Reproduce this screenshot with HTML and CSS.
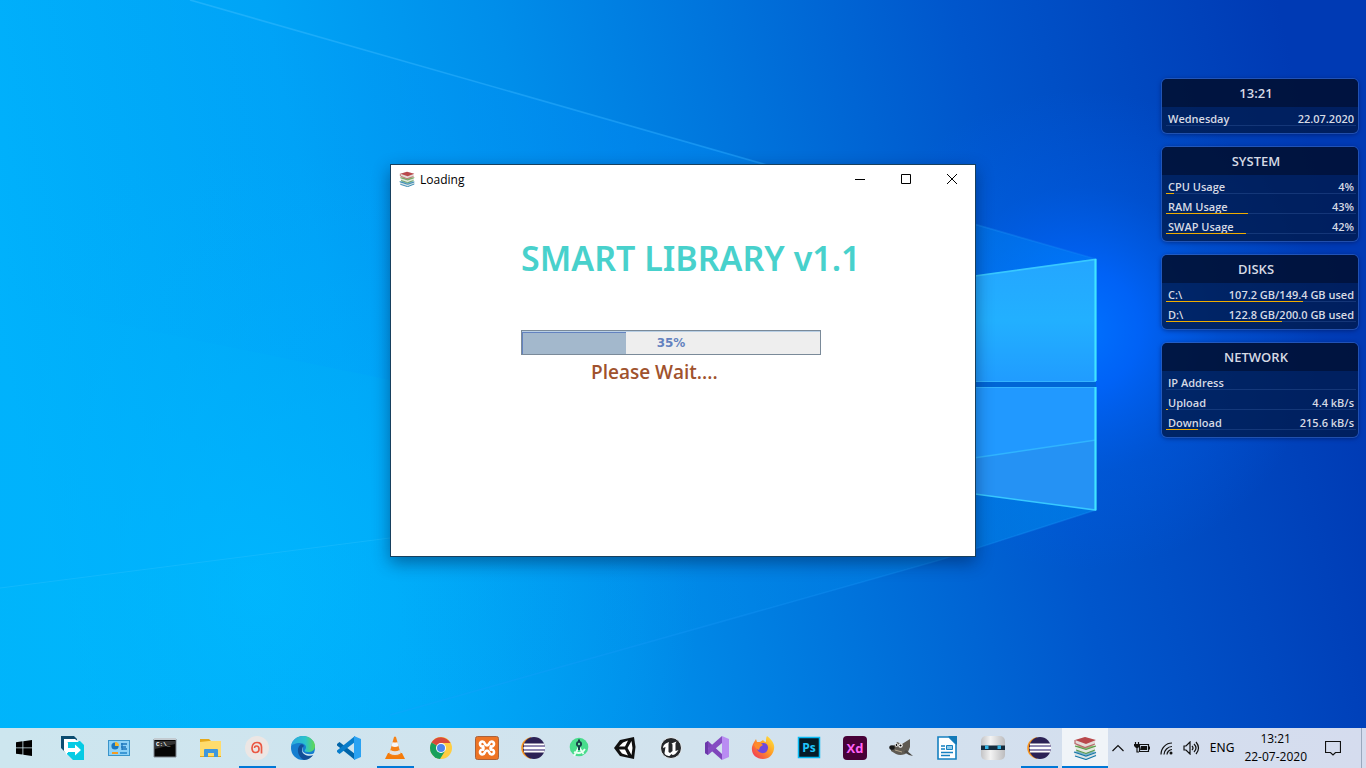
FILE: index.html
```html
<!DOCTYPE html>
<html lang="en">
<head>
<meta charset="utf-8">
<title>Desktop</title>
<link rel="stylesheet" href="styles.css">
</head>
<body>
<svg class="wallpaper" viewBox="0 0 1366 768" preserveAspectRatio="xMidYMid slice" aria-hidden="true">
  <defs>
    <linearGradient id="base" gradientUnits="userSpaceOnUse" x1="40" y1="520" x2="1330" y2="230">
      <stop offset="0" stop-color="#00b2fc"/><stop offset=".25" stop-color="#00a4f6"/><stop offset=".42" stop-color="#008eea"/><stop offset=".58" stop-color="#0074dc"/><stop offset=".76" stop-color="#0056cc"/><stop offset="1" stop-color="#003ab4"/>
    </linearGradient>
    <radialGradient id="glow" gradientUnits="userSpaceOnUse" cx="1080" cy="330" r="240">
      <stop offset="0" stop-color="#0072ff"/><stop offset=".25" stop-color="#0066ff" stop-opacity=".85"/><stop offset=".6" stop-color="#0060f0" stop-opacity=".3"/><stop offset="1" stop-color="#0060f0" stop-opacity="0"/>
    </radialGradient>
    <radialGradient id="cyan" gradientUnits="userSpaceOnUse" cx="260" cy="590" r="440">
      <stop offset="0" stop-color="#00b8ff" stop-opacity=".8"/><stop offset="1" stop-color="#00b0fa" stop-opacity="0"/>
    </radialGradient>
    <linearGradient id="beam" gradientUnits="userSpaceOnUse" x1="0" y1="0" x2="1096" y2="0">
      <stop offset="0" stop-color="#00a0ff" stop-opacity="0"/><stop offset=".55" stop-color="#0090ff" stop-opacity=".5"/><stop offset="1" stop-color="#00a0ff" stop-opacity=".6"/>
    </linearGradient>
    <linearGradient id="ray" gradientUnits="userSpaceOnUse" x1="190" y1="0" x2="1096" y2="0">
      <stop offset="0" stop-color="#40c0ff" stop-opacity=".45"/><stop offset=".65" stop-color="#28a8ff" stop-opacity=".5"/><stop offset="1" stop-color="#28a8ff" stop-opacity=".15"/>
    </linearGradient>
    <linearGradient id="low" gradientUnits="userSpaceOnUse" x1="390" y1="0" x2="1096" y2="0">
      <stop offset="0" stop-color="#00a0f0" stop-opacity="0"/><stop offset=".6" stop-color="#0090f0" stop-opacity=".25"/><stop offset="1" stop-color="#0090f0" stop-opacity=".55"/>
    </linearGradient>
    <linearGradient id="pool" gradientUnits="userSpaceOnUse" x1="0" y1="0" x2="390" y2="0">
      <stop offset="0" stop-color="#00baf8" stop-opacity=".3"/><stop offset="1" stop-color="#00baf8" stop-opacity="0"/>
    </linearGradient>
    <linearGradient id="pane" x1="0" y1="0" x2="0" y2="1">
      <stop offset="0" stop-color="#24a6ff"/><stop offset=".5" stop-color="#22b0ff"/><stop offset="1" stop-color="#209cff"/>
    </linearGradient>
  </defs>
  <rect width="1366" height="768" fill="url(#base)"/>
  <rect width="1366" height="768" fill="url(#cyan)"/>
  <rect width="1366" height="768" fill="url(#glow)"/>
  <path d="M190 0 1096 259 390 380 0 300V0z" fill="url(#beam)" opacity=".5"/>
  <path d="M190 0 1096 259" stroke="url(#ray)" stroke-width="1.6"/>
  <path d="M0 588 390 538V768H0z" fill="url(#pool)"/>
  <path d="M0 588 390 538" stroke="#30c4ff" opacity=".35"/>
  <path d="M1096 510 940 560 390 715 390 500 970 400z" fill="url(#low)"/>
  <path d="M1096 510 940 560 390 715" stroke="#20a0ff" stroke-width="1.500" fill="none" opacity=".25"/>
  <path d="M960 278 1096 259V381H960z" fill="url(#pane)"/>
  <path d="M960 387H1096V510L960 492z" fill="#2199ff"/>
  <path d="M960 460 1096 440V510L960 492z" fill="#2592f4"/>
  <path d="M960 460 1096 440" stroke="#30b4ff" stroke-width="1.500"/>
  <path d="M960 381.500H1096M960 387.500H1096" stroke="#34b4ff"/>
  <path d="M960 384.500H1096" stroke="#0066d6" stroke-width="5"/>
  <path d="M960 278 1095.500 259.500V381M1095.500 387V510L960 492" fill="none" stroke="#38c8ff" stroke-width="1.600"/>
  <path d="M1095.500 259V381M1095.500 387V510" stroke="#40e4ff" stroke-width="2"/>
</svg>

<svg class="sprite" aria-hidden="true">
  <symbol id="books" viewBox="0 0 24 24">
    <path d="M1 16 12 13l11 3v4l-10 3.500L2 20z" fill="#dbe3e6"/><path d="M1 16l11-3 11 3-10 3.500z" fill="#7fb3c9"/><path d="M1 16l12 4 10-3.500M2 20l11 3.500 10-4" fill="none" stroke="#1578a8" stroke-width="1.200"/>
    <path d="M2 10l10-2 10 2v4l-10 3.500L3 14z" fill="#e2e8e0"/><path d="M2 10l10-2 11 2-10 3.500z" fill="#93bb80"/><path d="M2 10l11 3.500 10-3.500M3 14l10 3.500 9-3.500" fill="none" stroke="#5b9b48" stroke-width="1.100"/>
    <path d="M2 4 12 1l10 3v4l-10 3.500L2 8z" fill="#e4dcd9"/><path d="M2 4 12 1l11 3-10 4z" fill="#b9484c"/><path d="M2 4v3.500l10 4L22 8" fill="none" stroke="#b9686a" stroke-width="1.200"/>
  </symbol>
  <symbol id="eclipse" viewBox="0 0 24 24">
    <path d="M10 1C-3 4-3 20 10 23L8 12z" fill="#f7941e"/><circle cx="13" cy="12" r="11" fill="#2c2255"/><path d="M3 8.500h20.500M2.500 12h21.500M3 15.500h20.500" stroke="#fff" stroke-width="2"/><path d="M3 10.200h21M3 13.800h21" stroke="#8d86b4" stroke-width="1.500"/>
  </symbol>
</svg>

<main class="desktop">
  <section class="window" aria-labelledby="window-title">
    <header class="titlebar">
      <svg class="titlebar-icon" aria-hidden="true"><use href="#books"/></svg>
      <span id="window-title" class="titlebar-text">Loading</span>
      <button class="caption-button" aria-label="Minimize"><svg viewBox="0 0 10 10"><path d="M0 5.500h10"/></svg></button>
      <button class="caption-button" aria-label="Maximize"><svg viewBox="0 0 10 10"><path d="M.5.5h9v9h-9z"/></svg></button>
      <button class="caption-button" aria-label="Close"><svg viewBox="0 0 10 10"><path d="M0 0l10 10M10 0 0 10"/></svg></button>
    </header>
    <div class="splash">
      <h1 class="splash-title">SMART LIBRARY v1.1</h1>
      <div class="loader">
        <progress id="load" class="loader-bar" value="35" max="100"></progress>
        <label for="load" class="loader-text">35%</label>
      </div>
      <p class="splash-wait">Please Wait....</p>
    </div>
  </section>

  <aside class="gadgets">
    <section class="gadget">
      <h2 class="gadget-title">13:21</h2>
      <div class="gadget-row"><span>Wednesday</span><span>22.07.2020</span></div>
    </section>
    <section class="gadget">
      <h2 class="gadget-title">SYSTEM</h2>
      <div class="gadget-row"><span>CPU Usage</span><span>4%</span><i class="meter" style="width:4%"></i></div>
      <div class="gadget-row"><span>RAM Usage</span><span>43%</span><i class="meter" style="width:43%"></i></div>
      <div class="gadget-row"><span>SWAP Usage</span><span>42%</span><i class="meter" style="width:42%"></i></div>
    </section>
    <section class="gadget">
      <h2 class="gadget-title">DISKS</h2>
      <div class="gadget-row"><span>C:\</span><span>107.2 GB/149.4 GB used</span><i class="meter" style="width:72%"></i></div>
      <div class="gadget-row"><span>D:\</span><span>122.8 GB/200.0 GB used</span><i class="meter" style="width:61%"></i></div>
    </section>
    <section class="gadget">
      <h2 class="gadget-title">NETWORK</h2>
      <div class="gadget-row"><span>IP Address</span></div>
      <div class="gadget-row"><span>Upload</span><span>4.4 kB/s</span><i class="meter" style="width:1%"></i></div>
      <div class="gadget-row"><span>Download</span><span>215.6 kB/s</span><i class="meter" style="width:17%"></i></div>
    </section>
  </aside>
</main>

<footer class="taskbar">
  <button class="start" aria-label="Start"><svg viewBox="0 0 16 16"><path d="M0 2.300 6.500 1.300v6.200H0zM7.300 1.200 16 0v7.500H7.300zM0 8.300h6.500v6.300L0 13.700zM7.300 8.300H16V16l-8.700-1.300z"/></svg></button>
  <nav class="apps" aria-label="Running apps">
    <button class="app" aria-label="File sync"><svg viewBox="0 0 24 24"><path d="M0 0h13l3 3v15H6L0 12z" fill="#0b4c70"/><path d="M3 3h10l4 4v13H9l-6-6z" fill="#fff"/><path d="M6 5h13l4 4v15H12l-7-7h2V7z" fill="#06cbe4"/><path d="M3 3h11l4 3H6v13l-3-4z" fill="#fff"/><path d="M7 12h7V8.500l6 5.500-6 5.500V16H7z" fill="#fff"/></svg></button>
    <button class="app" aria-label="Control Panel"><svg viewBox="0 0 24 24"><rect x="1.500" y="4.500" width="21" height="15" fill="#8dd1f7" stroke="#3994ca"/><circle cx="8" cy="10" r="3.600" fill="#1c77bd"/><path d="M8 6a4 4 0 0 1 4 4H8z" fill="#f6b72e"/><path d="M14 8h6M14 11h5M15 13h5M15 7v7" stroke="#1c77bd" stroke-width="1.300"/><path d="M5 17h6" stroke="#f39b22" stroke-width="2"/><path d="M13 17h7" stroke="#2385ca" stroke-width="1.500"/></svg></button>
    <button class="app" aria-label="Command Prompt"><svg viewBox="0 0 24 24"><path d="M1 3h22v18H1z" fill="#050505" stroke="#808891"/><path d="M1 2h22v2H1z" fill="#c3cbd1"/><path d="M2 13 22 8V5H2z" fill="#333"/><text x="3" y="10" class="prompt-text">C:\_</text></svg></button>
    <button class="app" aria-label="File Explorer"><svg viewBox="0 0 24 24"><path d="M1 3h9l2 2h10v16H1z" fill="#e5a91b"/><path d="M1 6l9-1h12v15H1z" fill="#ffdc6c"/><path d="M5 21v-7q0-1 1-1h12q1 0 1 1v7h-4v-4H9v4z" fill="#3f97dc"/></svg></button>
    <button class="app running" aria-label="Assistant"><svg viewBox="0 0 24 24"><circle cx="12" cy="12" r="12" fill="#ece6e4"/><path d="M16.500 17.500V11c0-3-2-4.500-4.500-4.500S7 8.500 7 12c0 3 1.500 4.500 3.500 4.500S14 15 14 13s-1-3-2.500-3-2 1-2 2" fill="none" stroke="#ea5843" stroke-width="1.700"/></svg></button>
    <button class="app" aria-label="Microsoft Edge"><svg viewBox="0 0 24 24"><defs><linearGradient id="edgeTop"><stop offset="0" stop-color="#2ba6df"/><stop offset=".6" stop-color="#2bc4cb"/><stop offset="1" stop-color="#62d94d"/></linearGradient></defs><circle cx="12" cy="12" r="12" fill="#157ed0"/><path d="M0 10C1 4 6 0 12 0c7 0 12 5 12 10 0 4-3 6-7 6-3 0-4-1-3-2 3-4-1-7-5-7-5 0-8 2-9 3z" fill="url(#edgeTop)"/><path d="M9 9c-4 4-2 12 4 15 4 0 8-3 10-6-5 3-12 1-12-4 0-2 1-3 2-4-1-2-3-2-4-1z" fill="#124f98"/><path d="M12 11c-3 6 5 9 12 6v1l-1 1c-5 2-12 0-12-5 0-1 0-2 1-3z" fill="#d3e8f0"/></svg></button>
    <button class="app" aria-label="Visual Studio Code"><svg viewBox="0 0 24 24"><path d="m0 8 2.500-2L18 18v6L0 9.500z" fill="#0065a9"/><path d="m0 16 2.500 2L18 6V0L0 14.500z" fill="#087dcb"/><path d="m17 0 7 3v18l-7 3z" fill="#2aa2f2"/></svg></button>
    <button class="app running" aria-label="VLC"><svg viewBox="0 0 24 24"><path d="m5 17-3 6h20l-3-6z" fill="#f47b0a"/><path d="M11 1q1-1 2 0l5 18q-6 3-12 0z" fill="#f58216"/><path d="m9.600 6-1.200 4q3.600 2 7.200 0l-1.200-4q-2.400 1-4.800 0z" fill="#f6f6f6"/><path d="m7.400 14-1 3.500q5.600 3 11.200 0l-1-3.500q-4.600 2.500-9.200 0z" fill="#e4e4e4"/></svg></button>
    <button class="app" aria-label="Google Chrome"><svg viewBox="0 0 24 24"><circle cx="12" cy="12" r="11" fill="#ffcd41"/><path d="M12 12 2.500 6.500A11 11 0 0 1 21.500 7H12z" fill="#d94a3b"/><path d="M2.500 6.500A11 11 0 0 0 11 23l5-8-4-3z" fill="#18a05c"/><circle cx="12" cy="12" r="5" fill="#fff"/><circle cx="12" cy="12" r="4" fill="#4c85ed"/></svg></button>
    <button class="app" aria-label="XAMPP"><svg viewBox="0 0 24 24"><rect x=".5" y=".5" width="23" height="23" rx="2" fill="#ee7424" stroke="#a8623c"/><path d="M8.500 10.500C4 11 4 5.500 7.500 5.500c3 0 1.500 4 4.500 4s1.500-4 4.500-4c3.500 0 3.500 5.500-1 5" fill="none" stroke="#fff" stroke-width="2.600"/><path d="M8.500 13.500C4 13 4 18.500 7.500 18.500c3 0 1.500-4 4.500-4s1.500 4 4.500 4c3.500 0 3.500-5.500-1-5" fill="none" stroke="#fff" stroke-width="2.600"/><path d="M7.500 9.500q2 2.500 0 5M16.500 9.500q-2 2.500 0 5" fill="none" stroke="#fff" stroke-width="2.600"/></svg></button>
    <button class="app" aria-label="Eclipse"><svg><use href="#eclipse"/></svg></button>
    <button class="app" aria-label="Android Studio"><svg viewBox="0 0 24 24"><circle cx="12" cy="11" r="9.300" fill="#48dc8c"/><path d="m12 11-5 9M12 11l4.500 7" stroke="#e9fff2" stroke-width="1.800"/><path d="M7 16q7 3 11-3" fill="none" stroke="#e9fff2" stroke-width="1.800"/><circle cx="12" cy="8" r="3" fill="#173f49"/><path d="M12 3.500v3M12 10v4" stroke="#173f49" stroke-width="2"/><circle cx="12" cy="8" r="1.200" fill="#6de6a2"/></svg></button>
    <button class="app" aria-label="Unity"><svg viewBox="0 0 24 24"><path d="M1 12 7 4 21 1l1.500 10L21 23 7 20z" fill="#101010"/><path d="m6 10.500 4-4 5-2-3 6zM6 13.500h6l3 6-6-2zM14.500 12l4-7 1 7-1 7z" fill="#fff"/></svg></button>
    <button class="app" aria-label="Unreal Engine"><svg viewBox="0 0 24 24"><circle cx="12" cy="12" r="10.500" fill="#25272a" stroke="#e8edf0"/><path d="M4 12c0-3 3-5 6-6L9.500 8v8l1.500 1 2.500-2V8.500l-1-1 5-2-1 2V15l3-1c-2 3-4 5-6 5l-1-1-2 2c-2 0-5-1-5-3l1-6z" fill="#fff"/></svg></button>
    <button class="app" aria-label="Visual Studio"><svg viewBox="0 0 24 24"><path d="m0 7 3-2 14 13v6L0 9z" fill="#7f45bb"/><path d="m0 17 3 2L17 7V0L0 15z" fill="#854dc2"/><path d="M0 7v10l3 2V5z" fill="#6c38aa"/><path d="m17 0 7 3v18l-7 3z" fill="#b98cf2"/></svg></button>
    <button class="app" aria-label="Firefox"><svg viewBox="0 0 24 24"><defs><linearGradient id="fox" x1="1" y1="0" x2="0" y2="1"><stop offset="0" stop-color="#fff044"/><stop offset=".45" stop-color="#ff9c25"/><stop offset="1" stop-color="#ef265f"/></linearGradient></defs><path d="M1 11C2 7 4 5 5 3l1 3h3l3-2c1 1 2 2 3 2 0-3 0-4 1-6 5 4 8 8 7 13-1 6-5 10-11 10C5 23 0 18 1 11z" fill="url(#fox)"/><path d="M9 8c6-3 10 2 7 7-3 4-9 2-10-2z" fill="#7048dc"/><path d="m3 8 5-2 4 3-3 2-1 3c-3-1-5-4-5-6z" fill="#ff8b2c"/></svg></button>
    <button class="app" aria-label="Photoshop"><svg viewBox="0 0 24 24"><rect x="1.500" y="1.500" width="21" height="20" fill="#061c28" stroke="#08baf4" stroke-width="1.500"/><text x="12" y="16" class="adobe-text ps-text">Ps</text></svg></button>
    <button class="app" aria-label="Adobe XD"><svg viewBox="0 0 24 24"><rect width="24" height="24" rx="4" fill="#470137"/><text x="12" y="17" class="adobe-text xd-text">Xd</text></svg></button>
    <button class="app" aria-label="GIMP"><svg viewBox="0 0 24 24"><path d="m2 11 5-3 1-2 5 2 8-5v8l-2 5c-3 3-8 4-12 2l-5-3z" fill="#5f5a52"/><path d="m17 14 7 6-4-1-5-3z" fill="#4a4844"/><circle cx="7.500" cy="9" r="1.800" fill="#fff"/><circle cx="11.500" cy="9.500" r="2.200" fill="#fff"/><circle cx="7.500" cy="9" r=".9"/><circle cx="11.500" cy="9.500" r="1.100"/><ellipse cx="3" cy="11.500" rx="2.700" ry="2.300" fill="#191919"/><path d="m6 14 7 2" stroke="#b4a68d"/></svg></button>
    <button class="app" aria-label="LibreOffice Writer"><svg viewBox="0 0 24 24"><path d="M3 1h11l7 7v15H3z" fill="#fff" stroke="#1680c0" stroke-width="1.600"/><path d="M13 0h9v9z" fill="#147ab8"/><path d="M6 10h4M6 13h4M6 16.500h12M6 19.500h9" stroke="#1680c0" stroke-width="1.400"/><path d="M11.500 9.500h6v4h-6z" fill="#8fcbea" stroke="#1680c0"/></svg></button>
    <button class="app" aria-label="Robot"><svg viewBox="0 0 24 24"><defs><linearGradient id="bot"><stop offset="0" stop-color="#c4c4c6"/><stop offset=".4" stop-color="#f3f3f3"/><stop offset="1" stop-color="#bcbcbe"/></linearGradient></defs><rect width="24" height="24" rx="5" fill="url(#bot)"/><path d="M0 9.500h24v4.500H0z" fill="#142b3d"/><path d="M4 9.500h3.500v3.500H4zM16.500 9.500H20v3.500h-3.500z" fill="#35b5e6"/></svg></button>
    <button class="app running" aria-label="Eclipse workspace"><svg><use href="#eclipse"/></svg></button>
    <button class="app active" aria-label="Loading"><svg><use href="#books"/></svg></button>
  </nav>
  <div class="tray">
    <button class="tray-button" aria-label="Show hidden icons"><svg width="12" height="8" viewBox="0 0 12 8"><path d="m.5 7 5.500-5.500L11.500 7"/></svg></button>
    <button class="tray-button" aria-label="Battery"><svg width="16" height="12" viewBox="0 0 16 12"><path d="M5.500 2.500h9v7h-9zM15.500 4.500v3M1.500 0v3M4.500 0v3M3 6v4h2"/><path d="M0 2h6v2L4 6H2L0 4z" fill="#111" stroke="none"/><path d="M7 4h6v4H6z" fill="#111" stroke="none"/></svg></button>
    <button class="tray-button" aria-label="Wi-Fi"><svg width="13" height="13" viewBox="0 0 13 13"><path d="M1 12.500C1 6 6 1 12 1M4 12.500c0-4 4-8 8-8M7 12.500c0-2 2-5 5-5"/><circle cx="11" cy="11" r="1.500" fill="#111" stroke="none"/></svg></button>
    <button class="tray-button" aria-label="Volume"><svg width="17" height="14" viewBox="0 0 17 14"><path d="M1 5h2l4-4v12L3 9H1zM9 5q2 2 0 4M11 3q4 4 0 8M13 1q5 6 0 12"/></svg></button>
    <button class="tray-button">ENG</button>
    <button class="clock"><span>13:21</span><span>22-07-2020</span></button>
    <button class="tray-button" aria-label="Notifications"><svg width="16" height="16" viewBox="0 0 16 16"><path d="M.5 1.500h15v11h-5L8 15l-2.500-2.500h-5z"/></svg></button>
  </div>
  <button class="show-desktop" aria-label="Show desktop"></button>
</footer>
</body>
</html>
```
FILE: styles.css
```css
* { box-sizing: border-box; }

body {
  margin: 0;
  min-height: 100vh;
  display: flex;
  flex-direction: column;
  overflow: hidden;
  background: #0078e0;
  color: #000;
  font: 12px/16px "Noto Sans", "Open Sans", sans-serif;
}

h1, h2, p { margin: 0; }

button {
  padding: 0;
  border: 0;
  background: none;
  color: inherit;
  font: inherit;
}

.sprite { position: absolute; width: 0; height: 0; }

.wallpaper {
  position: absolute;
  inset: 0;
  z-index: -1;
  width: 100%;
  height: 100%;
}

.desktop {
  position: relative;
  flex: 1;
  display: grid;
  place-items: center;
  padding-bottom: 8px;
}

/* Application window */
.window {
  width: 586px;
  max-width: 100%;
  min-height: 393px;
  border: 1px solid #17405f;
  background: #fff;
  box-shadow: 0 6px 16px rgba(0, 20, 60, .45);
}

.titlebar {
  display: flex;
  align-items: center;
  height: 29px;
  padding-left: 8px;
}

.titlebar-icon { width: 16px; height: 16px; margin-right: 5px; }
.titlebar-text { flex: 1; padding-top: 2px; font-family: "Open Sans", "Noto Sans", sans-serif; }

.caption-button {
  display: grid;
  place-items: center;
  width: 46px;
  height: 29px;
}

.caption-button svg {
  width: 10px;
  height: 10px;
  fill: none;
  stroke: #000;
}

.splash { padding: 40px 64px 40px 130px; }

.splash-title {
  color: #48d1cc;
  font: 600 34px/48px "Noto Sans", "Open Sans", sans-serif;
  white-space: nowrap;
}

.loader {
  display: grid;
  width: 300px;
  margin-top: 48px;
}

.loader-bar,
.loader-text { grid-area: 1 / 1; }

.loader-bar {
  appearance: none;
  width: 100%;
  height: 25px;
  border: 1px solid #7a8a99;
  background: #eee;
}

.loader-bar::-webkit-progress-bar { background: #eee; border-top: 1px solid #b8cfe5; }

.loader-bar::-webkit-progress-value {
  background: #a3b8cc;
  border-left: 1px solid #6382bf;
  border-top: 1px solid #6382bf;
}

.loader-text {
  place-self: center;
  padding-top: 1px;
  color: #6382bf;
  font: bold 12px/16px "DejaVu Sans", sans-serif;
}

.splash-wait {
  margin-top: 5px;
  padding-left: 70px;
  color: #a0522d;
  font: 600 19px/24px "Open Sans", "Noto Sans", sans-serif;
}

/* Desktop gadgets */
.gadgets {
  position: absolute;
  top: 79px;
  right: 8px;
  display: grid;
  gap: 14px;
  width: 196px;
}

.gadget {
  padding-bottom: 6px;
  border-radius: 5px;
  background: rgba(0, 24, 72, .78);
  box-shadow: 0 0 0 1px rgba(60, 110, 200, .55), 0 1px 5px rgba(0, 10, 60, .6);
  color: #d6dae4;
  font: 600 11px/20px "Open Sans", "Noto Sans", sans-serif;
}

.gadget-title {
  border-radius: 5px 5px 0 0;
  background: rgba(0, 8, 32, .5);
  padding-right: 8px;
  font: 600 13px/28px "Open Sans", "Noto Sans", sans-serif;
  text-align: center;
}

.gadget-row {
  position: relative;
  display: flex;
  justify-content: space-between;
  height: 20px;
  margin: 0 2px 0 4px;
  padding: 2px 2px 0;
  white-space: nowrap;
  background: linear-gradient(rgba(80, 120, 190, .25), rgba(80, 120, 190, .25)) 0 18px / 100% 1px no-repeat;
}

.meter {
  position: absolute;
  left: 0;
  top: 18px;
  height: 1px;
  background: #efac00;
}

/* Taskbar */
.taskbar {
  display: flex;
  height: 40px;
  background: linear-gradient(90deg, #cde6ef, #d2e3ee 50%, #d5dcee);
}

.start { width: 50px; padding-right: 2px; display: grid; place-items: center; }
.start svg { width: 16px; height: 16px; }

.apps { display: flex; }

.app {
  position: relative;
  display: grid;
  place-items: center;
  width: 46px;
  height: 40px;
}

.app svg { width: 24px; height: 24px; }

.app.running::after,
.app.active::after {
  content: "";
  position: absolute;
  bottom: 0;
  left: 5px;
  right: 4px;
  height: 2px;
  background: #0078d7;
}

.app.active { background: #f0f4f8; }
.app.active::after { left: 0; right: 0; }

.prompt-text { fill: #fff; font: bold 6px "Liberation Mono", monospace; }
.adobe-text { font: bold 12px "Open Sans", sans-serif; text-anchor: middle; }
.ps-text { fill: #20c4fa; }
.xd-text { fill: #ff61f6; font-size: 13px; }

.tray {
  flex: 1;
  display: flex;
  align-items: center;
  justify-content: flex-end;
  gap: 10px;
  padding-right: 20px;
}

.tray-button { display: grid; place-items: center; height: 40px; }
.tray-button svg { fill: none; stroke: #111; stroke-width: 1.2; }

.clock {
  display: grid;
  justify-items: center;
  margin-right: 8px;
  font-family: "Open Sans", "Noto Sans", sans-serif;
  line-height: 18px;
}

.show-desktop { width: 5px; border-left: 1px solid #9aa8bd; }
```
